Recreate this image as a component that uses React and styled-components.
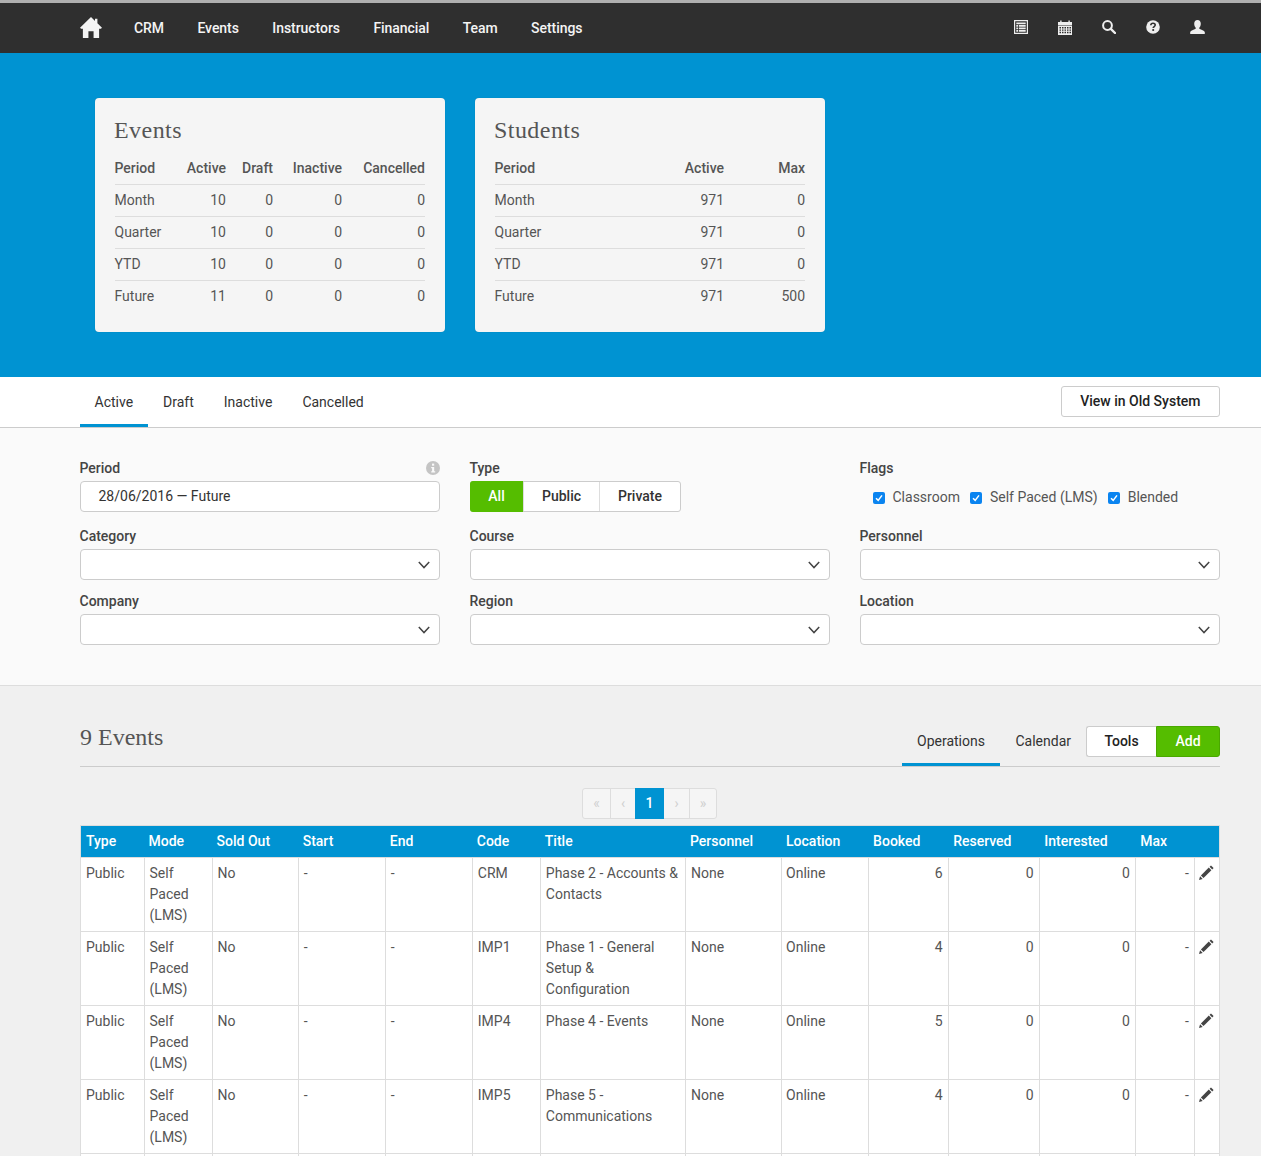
import React from 'react';
import styled, { createGlobalStyle } from 'styled-components';

const Global = createGlobalStyle`
  html, body { margin: 0; padding: 0; background: #f0f0f0; }
  html { height: 1156px; overflow: hidden; }
  body { font-family: Roboto, "Liberation Sans", sans-serif; font-size: 14px; color: #444; line-height: 21px; }
  * { box-sizing: border-box; }
`;
const Page = styled.div`height: 1156px; overflow: hidden;`;
const Nav = styled.header`
  height: 53px; background: #2f2f2f; border-top: 3px solid #b0b0b0; display: flex; align-items: center;
  padding: 0 55px 0 80px; color: #fff; font-weight: 500; font-size: 14px;
`;
const HomeLink = styled.a`display: flex; margin: -2px 32px 0 0; color: #f4f4f4;`;
const NavLink = styled.a`margin-right: 33.4px; color: #f4f4f4; letter-spacing: -.05px;`;
const Spacer = styled.div`flex: 1;`;
const NavIcon = styled.a`display: flex; width: 16px; height: 16px; margin-left: 28px; color: #eee;`;
const Hero = styled.section`height: 324px; background: #0093d2; display: flex; gap: 30px; padding: 45px 0 0 95px;`;
const Card = styled.div`
  width: 350px; height: 234px; background: #f5f5f5; border-radius: 4px; padding: 18px 20px 0 20px;
  box-shadow: 0 0 1px rgba(0,0,0,.2);
`;
const CardTitle = styled.h2`margin: 0 0 0 -1px; font: 400 24px/28px "Liberation Serif", serif; color: #555; letter-spacing: .45px;`;
const StatTable = styled.table`
  width: 310px; margin-top: 7px; border-collapse: collapse; table-layout: fixed; font-size: 14px;
  th, td { height: 32px; padding: 0; text-align: right; font-weight: 400; color: #555; border-bottom: 1px solid #ddd; }
  th { font-weight: 500; height: 33px; padding-top: 2px; }
  th:first-child, td:first-child { text-align: left; text-indent: -.5px; }
  tr:last-child td { border-bottom: 0; }
`;
const Tabs = styled.nav`
  height: 51px; background: #fff; border-bottom: 1px solid #ccc; display: flex; align-items: flex-start; padding: 0 41px 0 80px;
`;
const Tab = styled.a`
  height: 50px; padding: 15px 14.5px 0; margin-right: 1px; color: #333; font-size: 14px;
  border-bottom: ${p => (p.$active ? '3px solid #0093d2' : '0')};
`;
const Button = styled.a`
  display: flex; align-items: center; justify-content: center; height: 31px; background: #fff; border: 1px solid #ccc;
  border-radius: 3px; color: #222; font-weight: 500; font-size: 14px; padding: 0 18.5px;
`;
const OldSystem = styled(Button)`margin-top: 9px;`;
const Filters = styled.section`
  height: 258px; background: #fafafa; border-bottom: 1px solid #ddd; padding: 30px 41px 0 80px;
  display: grid; grid-template-columns: repeat(3, 360px); gap: 0 30px; grid-auto-rows: min-content;
`;
const Field = styled.div`height: ${p => p.$h}px; position: relative;`;
const Label = styled.label`display: block; font-weight: 500; font-size: 14px; line-height: 21px; color: #444; margin: 0 0 2px -.5px;`;
const Input = styled.div`
  height: 31px; border: 1px solid #ccc; border-radius: 4px; background: #fff; padding: 0 17.5px; display: flex; align-items: center;
  justify-content: space-between; color: #333; font-size: 14px;
`;
const SelectBox = styled(Input)`padding: 0 9.5px 0 18px; justify-content: flex-end;`;
const Info = styled.span`position: absolute; right: .5px; top: 3px; display: flex; color: #c4c4c4;`;
const Segments = styled.div`display: inline-flex; height: 31px; background: #fff; border: 1px solid #ccc; border-radius: 3px;`;
const Segment = styled.a`
  display: flex; align-items: center; justify-content: center; width: ${p => p.$w}px; font-weight: 500; color: ${p => (p.$on ? '#fff' : '#333')};
  background: ${p => (p.$on ? '#55bd00' : 'transparent')}; border-left: ${p => (p.$first ? '0' : '1px solid #ddd')};
  margin: ${p => (p.$on ? '-1px 0 -1px -1px' : '0')}; border-radius: ${p => (p.$on ? '3px 0 0 3px' : '0')};
`;
const Flags = styled.div`display: flex; align-items: center; height: 31px; padding: 2px 0 0 13px; color: #555;`;
const Flag = styled.span`display: flex; align-items: center; margin-right: 10.5px;`;
const Check = styled.span`
  display: flex; align-items: center; justify-content: center; width: 12px; height: 12px; border-radius: 2px; background: #0a84f0; margin-right: 7.5px;
`;
const Results = styled.section`padding: 0 41px 0 80px;`;
const ResultHead = styled.div`height: 81px; border-bottom: 1px solid #ccc; display: flex; align-items: flex-end; justify-content: space-between;`;
const ResultTitle = styled.h2`margin: 0 0 13px; font: 400 24px/32px "Liberation Serif", serif; color: #555; letter-spacing: 0;`;
const ResultNav = styled.div`display: flex; align-items: flex-start; height: 40px;`;
const ViewTab = styled.a`
  height: 40px; padding: 5px 15px 0 15.5px; font-size: 14px; color: #333; margin-bottom: -1px;
  border-bottom: ${p => (p.$active ? '3px solid #0093d2' : '0')};
`;
const Actions = styled.div`display: flex; height: 31px;`;
const ToolsButton = styled(Button)`width: 70px; padding: 0; border-radius: 3px 0 0 3px; border-right: 0;`;
const AddButton = styled(Button)`width: 64px; padding: 0; border-radius: 0 3px 3px 0; background: #55bd00; color: #fff; border-color: #4aa800;`;
const PagerRow = styled.div`display: flex; justify-content: center; height: 58px; padding: 21px 1px 0 0;`;
const Pager = styled.div`display: flex; height: 31px; background: #f5f5f5; border: 1px solid #ddd; border-radius: 3px;`;
const PageItem = styled.span`
  display: flex; align-items: center; justify-content: center; width: ${p => p.$w}px; color: ${p => (p.$on ? '#fff' : '#d0d0d0')};
  background: ${p => (p.$on ? '#0093d2' : 'transparent')}; font-weight: ${p => (p.$on ? 500 : 400)};
  border-left: ${p => (p.$first || p.$on ? '0' : '1px solid #ddd')};
  margin: ${p => (p.$on ? '-1px 0' : '0')};
`;
const DataTable = styled.table`
  width: 1140px; border-collapse: collapse; table-layout: fixed; background: #fff; border: 1px solid #ddd; font-size: 14px;
  th { height: 32px; background: #0093d2; color: #fff; font-weight: 500; text-align: left; padding: 0 5px 0 4px; white-space: nowrap; }
  th:first-child, th:nth-child(n+9) { padding-left: 5px; }
  td { height: 74px; padding: 5px 5px 5px 4.5px; vertical-align: top; border: 1px solid #ddd; color: #555; }
  td:first-child { padding-left: 5px; }
`;
const Num = styled.td`text-align: right;`;
const ActionCell = styled.td`&& { padding: 7px 0 0 4px; color: #444; }`;

const Home = () => (
  <svg width="22" height="21" viewBox="0 0 23 22" fill="currentColor"><path d="M11.5 0 L15.7 4.1 V1.8 H18.2 V6.6 L23 11.3 L21.9 12.4 H20 V22 H14.2 V14.8 H8.8 V22 H3 V12.4 H1.1 L0 11.3Z"/></svg>
);
const ListAlt = () => (
  <svg width="14" height="14" viewBox="0 0 14 14"><path fill="currentColor" fillRule="evenodd" d="M0 0H14V14H0Z M1.2 1.2V12.8H12.8V1.2Z M2.3 2.5H11.7V4.2H2.3Z M2.3 5H4V6.7H2.3Z M4.8 5H11.7V6.7H4.8Z M2.3 7.5H4V9.2H2.3Z M4.8 7.5H11.7V9.2H4.8Z M2.3 10H4V11.7H2.3Z M4.8 10H11.7V11.7H4.8Z"/></svg>
);
const Calendar = () => (
  <svg width="14" height="15" viewBox="0 0 14 15"><path fill="currentColor" d="M0 2H2.2V0.6H3.6V2H10.4V0.6H11.8V2H14V5H0Z"/><path fill="currentColor" fillRule="evenodd" d="M0 5.6H14V15H0Z M1.5 7V8.4H3V7Z M4 7V8.4H5.5V7Z M6.5 7V8.4H8V7Z M9 7V8.4H10.5V7Z M11.5 7V8.4H13V7Z M1.5 9.4V10.8H3V9.4Z M4 9.4V10.8H5.5V9.4Z M6.5 9.4V10.8H8V9.4Z M9 9.4V10.8H10.5V9.4Z M11.5 9.4V10.8H13V9.4Z M1.5 11.8V13.2H3V11.8Z M4 11.8V13.2H5.5V11.8Z M6.5 11.8V13.2H8V11.8Z M9 11.8V13.2H10.5V11.8Z M11.5 11.8V13.2H13V11.8Z"/></svg>
);
const Search = () => (
  <svg width="14" height="14" viewBox="0 0 14 14" fill="none" stroke="currentColor"><circle cx="5.5" cy="5.5" r="4.4" strokeWidth="2"/><path d="M8.8 8.8 L13 13" strokeWidth="2.4" strokeLinecap="round"/></svg>
);
const Question = () => (
  <svg width="14" height="14" viewBox="0 0 14 14"><circle cx="7" cy="7" r="6.8" fill="currentColor"/><path d="M4.8 5.3C4.9 3.9 5.8 3.3 7 3.3 8.3 3.3 9.2 4 9.2 5.1 9.2 6.6 7.2 6.6 7.2 8.1" fill="none" stroke="#2f2f2f" strokeWidth="1.6"/><rect x="6.3" y="9.1" width="1.8" height="1.8" fill="#2f2f2f"/></svg>
);
const User = () => (
  <svg width="15" height="14" viewBox="0 0 15 14" fill="currentColor"><path d="M7.5 0C9.6 0 10.8 1.6 10.8 3.8 10.8 5.6 10 7 9.3 7.8V8.8C11.4 9.8 14.2 10.4 14.8 12V14H0.2V12C0.8 10.4 3.6 9.8 5.7 8.8V7.8C5 7 4.2 5.6 4.2 3.8 4.2 1.6 5.4 0 7.5 0Z"/></svg>
);
const InfoSign = () => (
  <svg width="14" height="14" viewBox="0 0 14 14"><circle cx="7" cy="7" r="7" fill="currentColor"/><rect x="6" y="2.6" width="2.2" height="2.1" fill="#fafafa"/><path d="M5.2 6H8.2V10.2H9.2V11.4H5.2V10.2H6.1V7.2H5.2Z" fill="#fafafa"/></svg>
);
const Chevron = () => (
  <svg width="12" height="8" viewBox="0 0 12 8" fill="none" stroke="#444" strokeWidth="1.5"><path d="M0.8 1 L6 6.6 L11.2 1"/></svg>
);
const Tick = () => (
  <svg width="8" height="8" viewBox="0 0 8 8" fill="none" stroke="#fff" strokeWidth="1.5"><path d="M1 4.2 L3.2 6.4 L7 1.4"/></svg>
);
const Pencil = () => (
  <svg width="15" height="15" viewBox="0 0 15 15" fill="currentColor"><path d="M0 15 L1.1 11.3 L3.7 13.9Z"/><path d="M1.9 10.5 L9.8 2.6 L12.4 5.2 L4.5 13.1Z"/><path d="M10.6 1.8 L12 .4 L14.6 3 L13.2 4.4Z"/></svg>
);

const eventStats = [['Month','10'],['Quarter','10'],['YTD','10'],['Future','11']];
const studentStats = [['Month','0'],['Quarter','0'],['YTD','0'],['Future','500']];
const rows = [
  ['CRM', 'Phase 2 - Accounts & Contacts', '6'],
  ['IMP1', 'Phase 1 - General Setup & Configuration', '4'],
  ['IMP4', 'Phase 4 - Events', '5'],
  ['IMP5', 'Phase 5 - Communications', '4'],
];
const widths = [64, 68, 86, 87, 87, 68, 145, 95, 87, 80, 91, 96, 59, 25];
const heads = ['Type','Mode','Sold Out','Start','End','Code','Title','Personnel','Location','Booked','Reserved','Interested','Max',''];

const Select = ({ label }) => (
  <Field $h={65}>
    <Label>{label}</Label>
    <SelectBox><Chevron /></SelectBox>
  </Field>
);

export default function App() {
  return (
    <Page>
      <Global />
      <Nav>
        <HomeLink><Home /></HomeLink>
        {['CRM','Events','Instructors','Financial','Team','Settings'].map(n => <NavLink key={n}>{n}</NavLink>)}
        <Spacer />
        <NavIcon><ListAlt /></NavIcon>
        <NavIcon><Calendar /></NavIcon>
        <NavIcon><Search /></NavIcon>
        <NavIcon><Question /></NavIcon>
        <NavIcon><User /></NavIcon>
      </Nav>
      <Hero>
        <Card>
          <CardTitle>Events</CardTitle>
          <StatTable>
            <colgroup><col width="59"/><col width="52"/><col width="47"/><col width="69"/><col width="83"/></colgroup>
            <thead><tr><th>Period</th><th>Active</th><th>Draft</th><th>Inactive</th><th>Cancelled</th></tr></thead>
            <tbody>
              {eventStats.map(([p,a]) => <tr key={p}><td>{p}</td><td>{a}</td><td>0</td><td>0</td><td>0</td></tr>)}
            </tbody>
          </StatTable>
        </Card>
        <Card>
          <CardTitle>Students</CardTitle>
          <StatTable>
            <colgroup><col width="130"/><col width="99"/><col width="81"/></colgroup>
            <thead><tr><th>Period</th><th>Active</th><th>Max</th></tr></thead>
            <tbody>
              {studentStats.map(([p,m]) => <tr key={p}><td>{p}</td><td>971</td><td>{m}</td></tr>)}
            </tbody>
          </StatTable>
        </Card>
      </Hero>
      <Tabs>
        <Tab $active>Active</Tab>
        <Tab>Draft</Tab>
        <Tab>Inactive</Tab>
        <Tab>Cancelled</Tab>
        <Spacer />
        <OldSystem>View in Old System</OldSystem>
      </Tabs>
      <Filters>
        <Field $h={68}>
          <Label>Period</Label>
          <Info><InfoSign /></Info>
          <Input>28/06/2016 — Future</Input>
        </Field>
        <Field $h={68}>
          <Label>Type</Label>
          <Segments>
            <Segment $on $first $w={53}>All</Segment>
            <Segment $w={76}>Public</Segment>
            <Segment $w={81}>Private</Segment>
          </Segments>
        </Field>
        <Field $h={68}>
          <Label>Flags</Label>
          <Flags>
            <Flag><Check><Tick /></Check>Classroom</Flag>
            <Flag><Check><Tick /></Check>Self Paced (LMS)</Flag>
            <Flag><Check><Tick /></Check>Blended</Flag>
          </Flags>
        </Field>
        {['Category','Course','Personnel','Company','Region','Location'].map(l => <Select key={l} label={l} />)}
      </Filters>
      <Results>
        <ResultHead>
          <ResultTitle>9 Events</ResultTitle>
          <ResultNav>
            <ViewTab $active>Operations</ViewTab>
            <ViewTab>Calendar</ViewTab>
            <Actions>
              <ToolsButton>Tools</ToolsButton>
              <AddButton>Add</AddButton>
            </Actions>
          </ResultNav>
        </ResultHead>
        <PagerRow>
          <Pager>
            <PageItem $first $w={27}>«</PageItem>
            <PageItem $w={25}>‹</PageItem>
            <PageItem $on $w={29}>1</PageItem>
            <PageItem $first $w={25}>›</PageItem>
            <PageItem $w={27}>»</PageItem>
          </Pager>
        </PagerRow>
        <DataTable>
          <colgroup>{widths.map((w, i) => <col key={i} width={w} />)}</colgroup>
          <thead><tr>{heads.map((h, i) => <th key={i}>{h}</th>)}</tr></thead>
          <tbody>
            {rows.map(([code, title, booked]) => (
              <tr key={code}>
                <td>Public</td><td>Self Paced (LMS)</td><td>No</td><td>-</td><td>-</td><td>{code}</td><td>{title}</td>
                <td>None</td><td>Online</td><Num>{booked}</Num><Num>0</Num><Num>0</Num><Num>-</Num>
                <ActionCell><Pencil /></ActionCell>
              </tr>
            ))}
            <tr>{heads.map((h, i) => <td key={i} />)}</tr>
          </tbody>
        </DataTable>
      </Results>
    </Page>
  );
}
